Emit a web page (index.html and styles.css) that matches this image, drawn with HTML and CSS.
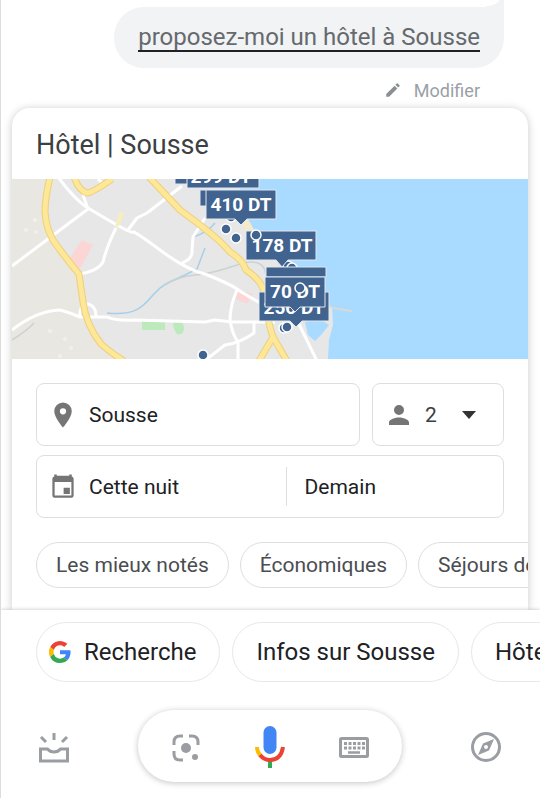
FILE: index.html
```html
<!DOCTYPE html>
<html lang="fr">
<head>
<meta charset="utf-8">
<meta name="viewport" content="width=device-width, initial-scale=1">
<title>Assistant</title>
<link rel="stylesheet" href="styles.css">
</head>
<body>
<main class="conversation">
  <div class="query">
    <p class="bubble"><span class="bubble-text">proposez-moi un hôtel à Sousse</span></p>
    <button class="edit" type="button">
      <svg width="18" height="18" viewBox="0 0 24 24" aria-hidden="true"><path fill="#8b8f93" d="M3 17.2V21h3.800L17.800 9.900l-3.700-3.700zM20.700 7a1 1 0 0 0 0-1.400l-2.300-2.300a1 1 0 0 0-1.400 0l-1.800 1.800 3.700 3.700z"/></svg>
      Modifier
    </button>
  </div>

  <section class="card">
    <h1 class="card-title">Hôtel | Sousse</h1>
    <svg class="map" viewBox="12 179 516 180" preserveAspectRatio="xMidYMid slice" role="img" aria-label="Sousse">
      <rect x="12" y="179" width="516" height="180" fill="#e7e7e7"/>
      <path fill="#e9e7e2" d="M12 179H58L45 212L55 240L82 275L85 310L95 335L123 359H12z"/>
      <path fill="#a9daff" d="M240 179H528V359H328L329 340L333 325L332 308L320 300L300 276L270 250L256 240L240 216z"/>
      <path fill="#f4eacb" d="M240 219l8 0 8 14-8 5z"/>
      <path fill="#a9daff" d="M305 322L318 318L329 325L322 334L315 341L308 335z"/>
      <path d="M326 304L333 308L352 311" fill="none" stroke="#d9d9d5" stroke-width="2"/>
      <g fill="#fbd6d5"><path d="M82 240L93 245L80 269L69 259z"/><path d="M237 289L253 294L247 304L236 299z"/></g>
      <g fill="#bdeabd"><path d="M142 320h23v10h-23z"/><path d="M173 323q11-5 11 6q-1 7-7 5q-4-5-4-11z"/></g>
      <g fill="#f1f0ea"><circle cx="35" cy="220" r="2"/><circle cx="26" cy="230" r="2"/><circle cx="36" cy="232" r="2"/><circle cx="50" cy="331" r="2"/><circle cx="65" cy="339" r="2"/><circle cx="71" cy="348" r="2"/><circle cx="60" cy="356" r="2"/></g>
      <g fill="none" stroke="#a6cfea" stroke-width="1.500">
        <path d="M107 313C135 316 143 307 153 295S174 280 183 276L197 269L205 248M193 237Q207 233 215 223"/>
        <path stroke="#cbd2d6" d="M12 340Q28 330 34 323M165 285Q180 276 195 275T237 265T266 275"/>
      </g>
      <g fill="none" stroke="#fff" stroke-width="3" stroke-linejoin="round">
        <path d="M58 177Q75 200 88 208T117 225T133 232T160 250T205 274Q230 284 237 289T262 304"/>
        <path d="M12 266L88 209L83 195M98 179l4 4M80 274Q98 271 103 262Q107 246 116 228M128 230L137 218L147 213L182 186"/>
        <path d="M12 330Q36 311 60 310Q68 312 80 317H107Q115 321 135 320L205 322L215 320L232 322H275"/>
        <path d="M80 317Q79 304 88 304Q96 306 96 316M182 263Q193 259 192 250L193 237L205 218"/>
        <path d="M237 290Q230 306 230 320Q232 334 238 342V359M207 359L225 345Q240 343 254 333V323M298 322L317 361"/>
      </g>
      <path d="M117 226L122 212" stroke="#f7efb7" stroke-width="4" fill="none"/>
      <g fill="none" stroke-linejoin="round">
        <g stroke="#ecd07c" stroke-width="7">
          <path d="M50 177Q45 198 45 212Q46 228 53 240Q64 256 79 274L83 302Q86 325 101 344Q110 352 124 361"/>
          <path d="M74 177Q79 191 87 193Q92 193 112 179M149 177L180 210L200 225Q220 240 230 252Q243 260 246 270Q265 282 266 301T273 337L259 361M273 337L287 361"/>
        </g>
        <g stroke="#fee796" stroke-width="5">
          <path d="M50 177Q45 198 45 212Q46 228 53 240Q64 256 79 274L83 302Q86 325 101 344Q110 352 124 361"/>
          <path d="M74 177Q79 191 87 193Q92 193 112 179M149 177L180 210L200 225Q220 240 230 252Q243 260 246 270Q265 282 266 301T273 337L259 361M273 337L287 361"/>
        </g>
      </g>
      <g class="pin">
        <circle cx="231" cy="217" r="5"/><circle cx="226" cy="229" r="5"/><circle cx="236" cy="238" r="5"/>
        <circle cx="288" cy="266" r="5"/><circle cx="292" cy="268" r="5"/><circle cx="284" cy="328" r="5"/><circle cx="287" cy="327" r="5"/><circle cx="203" cy="355" r="5"/>
      </g>
      <g class="tag">
        <path d="M175 170H196V184H175z"/>
        <path d="M187 160H259V188H187z"/><text x="221" y="183">299 DT</text>
        <path d="M200 190H230V206H200z"/>
        <path d="M206 190H276V219H247L241 225L235 219H206z"/><text x="241" y="211">410 DT</text>
        <path d="M246 231H316V260H288L282 267L276 260H246z"/><text x="282" y="252">178 DT</text>
        <path d="M259 292H329V321H302L296 327L290 321H259z"/><text x="294" y="314">256 DT</text>
        <path d="M266 267H326V277H266z"/>
        <path d="M265 277H325V307H300L295 312L290 307H265z"/><text x="295" y="298">70 DT</text>
      </g>
      <g class="pin"><circle cx="256" cy="235" r="5"/><circle cx="300" cy="288" r="5"/></g>
    </svg>

    <form class="search">
      <div class="row">
        <label class="field place">
          <svg width="30" height="30" viewBox="0 0 24 24" aria-hidden="true"><path fill="#757575" d="M12 2a7 7 0 0 0-7 7c0 5.200 7 13 7 13s7-7.800 7-13a7 7 0 0 0-7-7zm0 9.500a2.500 2.500 0 1 1 0-5 2.500 2.500 0 0 1 0 5z"/></svg>
          <input type="text" value="Sousse" aria-label="Destination">
        </label>
        <label class="field guests">
          <svg width="30" height="30" viewBox="0 0 24 24" aria-hidden="true"><path fill="#757575" d="M12 12a4 4 0 1 0 0-8 4 4 0 0 0 0 8zm0 2c-2.700 0-8 1.300-8 4v2h16v-2c0-2.700-5.300-4-8-4z"/></svg>
          <select aria-label="Voyageurs"><option>2</option></select>
          <svg class="arrow" width="16" height="8" viewBox="0 0 16 8" aria-hidden="true"><path fill="#333" d="M1 0h14L8 8z"/></svg>
        </label>
      </div>
      <div class="field dates">
        <button class="date" type="button">
          <svg width="30" height="30" viewBox="0 0 24 24" aria-hidden="true"><path fill="#757575" fill-rule="evenodd" d="M17.500 12.500h-5v5h5zM17 2v1H7V2H5v1.500a1.800 1.800 0 0 0-1.500 1.800v13.400A1.800 1.800 0 0 0 5.300 20.500h13.400a1.800 1.800 0 0 0 1.800-1.800V5.300A1.800 1.800 0 0 0 19 3.500V2zM18.700 18.700H5.300V8h13.400z"/></svg>
          Cette nuit
        </button>
        <button class="date end" type="button">Demain</button>
      </div>
    </form>
    <div class="filters">
      <button type="button">Les mieux notés</button>
      <button type="button">Économiques</button>
      <button type="button">Séjours de luxe</button>
    </div>
  </section>
</main>

<footer class="sheet">
  <div class="suggestions">
    <button class="search-chip" type="button">
      <svg width="22" height="22" viewBox="0 0 48 48" aria-hidden="true">
        <path fill="#ea4335" d="M24 9.500c3.500 0 6.700 1.200 9.200 3.600l6.900-6.900A24 24 0 0 0 2.600 13.200l8 6.200C12.400 13.700 17.700 9.500 24 9.500z"/>
        <path fill="#4285f4" d="M47 24.600c0-1.600-.2-3.100-.4-4.600H24v9h12.900a11 11 0 0 1-4.700 7.200l7.700 6C44.400 38 47 31.800 47 24.600z"/>
        <path fill="#fbbc05" d="M10.500 28.600a14.500 14.500 0 0 1 0-9.200l-8-6.200a24 24 0 0 0 0 21.600z"/>
        <path fill="#34a853" d="M24 48c6.500 0 11.900-2.100 15.900-5.800l-7.700-6A14.400 14.400 0 0 1 10.500 28.600l-8 6.200A24 24 0 0 0 24 48z"/>
      </svg>
      Recherche
    </button>
    <button type="button">Infos sur Sousse</button>
    <button type="button">Hôtels</button>
  </div>
  <nav class="bar">
    <button class="icon" type="button" aria-label="Mises à jour">
      <svg width="36" height="36" viewBox="0 0 36 36" fill="none" stroke="#9a9da1" stroke-width="3" aria-hidden="true"><path d="M4.500 20v12h27V20h-7q-2.500 3-6.500 3T11.500 20zM18 4v7M5 8l5 5M31 8l-5 5"/></svg>
    </button>
    <div class="pill">
      <button class="icon" type="button" aria-label="Lens">
        <svg width="32" height="32" viewBox="0 0 32 32" fill="none" stroke="#9a9da1" stroke-width="3" aria-hidden="true"><path d="M4 14v-3q0-6 6-6h3M19 5h3q6 0 6 6v3M4 20v3q0 6 6 6h3"/><circle cx="16" cy="17" r="5" fill="#9a9da1" stroke="none"/><circle cx="25" cy="26" r="3" fill="#9a9da1" stroke="none"/></svg>
      </button>
      <button class="icon" type="button" aria-label="Micro">
        <svg width="32" height="44" viewBox="0 0 32 44" fill="none" stroke-width="4" aria-hidden="true"><path stroke="#34a853" d="M16 35v8"/><path stroke="#fbbc05" d="M3 22q0 5 4 9"/><path stroke="#ea4335" d="M6 30q4 5 10 5q11 0 13-13"/><rect x="9.500" y="1" width="13" height="28" rx="6.500" fill="#4285f4"/></svg>
      </button>
      <button class="icon" type="button" aria-label="Clavier">
        <svg width="32" height="32" viewBox="0 0 32 32" aria-hidden="true"><rect x="2.500" y="7.500" width="27" height="18" rx="1" fill="none" stroke="#9a9da1" stroke-width="3"/><path fill="none" stroke="#9a9da1" stroke-width="3" stroke-dasharray="3 1.500" d="M6 12.500h21M6 17h21"/><path stroke="#9a9da1" stroke-width="2.500" d="M10 21.500h12"/></svg>
      </button>
    </div>
    <button class="icon" type="button" aria-label="Explorer">
      <svg width="36" height="36" viewBox="0 0 36 36" aria-hidden="true"><circle cx="18" cy="18" r="13.500" fill="none" stroke="#9a9da1" stroke-width="3"/><path fill="#9a9da1" fill-rule="evenodd" d="M26 10l-5 11.500L10 26l5-11.500zM18 16a2 2 0 1 0 0 4 2 2 0 0 0 0-4z"/></svg>
    </button>
  </nav>
</footer>
</body>
</html>
```
FILE: styles.css
```css
* {
  box-sizing: border-box;
}

body {
  margin: 0;
  height: 100vh;
  display: flex;
  flex-direction: column;
  overflow: hidden;
  border-left: 1px solid #dcdcdc;
  background: #fff;
  color: #202124;
  font-family: Roboto, "Liberation Sans", sans-serif;
}

button,
input,
select {
  border: 0;
  padding: 0;
  background: none;
  color: inherit;
  font: inherit;
}

svg {
  display: block;
  flex: none;
}

.conversation {
  flex: 1;
  min-height: 0;
  display: flex;
  flex-direction: column;
  padding: 7px 12px 0 11px;
}

.query {
  display: flex;
  flex-direction: column;
  align-items: flex-end;
  padding-right: 24px;
}

.bubble {
  position: relative;
  margin: 0;
  padding: 17px 24px 16px;
  border-radius: 30px 0 30px 30px;
  background: #f1f3f4;
  color: #66696d;
  font-size: 24px;
  line-height: 26px;
}

.bubble::before {
  content: "";
  position: absolute;
  right: 0;
  bottom: 100%;
  width: 24px;
  height: 8px;
  background: radial-gradient(ellipse 20px 8px at 0 0, #fff 96%, #f1f3f4);
}

.bubble-text {
  display: block;
  border-bottom: 2px solid #202124;
}

.edit {
  display: flex;
  align-items: center;
  gap: 12px;
  height: 40px;
  padding: 4px 24px 0 0;
  color: #9aa0a6;
  font-size: 18px;
}

.card {
  flex: 1;
  min-height: 0;
  overflow: hidden;
  border-radius: 18px 18px 0 0;
  box-shadow: 0 1px 8px rgba(0, 0, 0, 0.22);
  background: #fff;
}

.card-title {
  margin: 0;
  padding: 21px 24px 18px;
  color: #3c4043;
  font-size: 27px;
  font-weight: 400;
  line-height: 32px;
}

.map {
  width: 100%;
  height: 180px;
}

.pin {
  fill: #41638f;
  stroke: #fff;
  stroke-width: 1.5;
}

.tag path {
  fill: #41638f;
  stroke: #e2e8ef;
  stroke-width: 1;
}

.tag text {
  fill: #fff;
  font-size: 19px;
  font-weight: 700;
  text-anchor: middle;
}

.search {
  display: flex;
  flex-direction: column;
  gap: 9px;
  padding: 24px;
  font-size: 21px;
}

.row {
  display: flex;
  gap: 12px;
}

.field {
  display: flex;
  align-items: center;
  height: 63px;
  border: 1px solid #dedede;
  border-radius: 8px;
}

.place {
  flex: 1;
  min-width: 0;
  gap: 11px;
  padding: 0 11px;
}

.place input {
  flex: 1;
  min-width: 0;
}

.guests {
  position: relative;
  width: 132px;
  color: #3c4043;
}

.guests > svg:first-child {
  margin-left: 11px;
}

.guests select {
  flex: 1;
  align-self: stretch;
  padding-left: 11px;
  appearance: none;
}

.arrow {
  position: absolute;
  right: 26px;
  pointer-events: none;
}

.dates {
  display: grid;
  grid-template-columns: 8fr 7fr;
}

.date {
  display: flex;
  align-items: center;
  gap: 11px;
  height: 39px;
  padding-left: 11px;
}

.end {
  padding-left: 18px;
  border-left: 1px solid #dedede;
}

.filters,
.suggestions {
  display: flex;
  overflow: hidden;
  white-space: nowrap;
}

.filters {
  gap: 11px;
  padding-left: 24px;
}

.filters button {
  flex: none;
  height: 46px;
  padding: 0 19px;
  border: 1px solid #dedede;
  border-radius: 23px;
  color: #4a4d51;
  font-size: 21px;
}

.sheet {
  position: relative;
  display: flex;
  flex-direction: column;
  gap: 28px;
  padding: 12px 0 16px;
  background: #fff;
  box-shadow: 0 -1px 3px rgba(0, 0, 0, 0.16);
}

.suggestions {
  gap: 12px;
  padding-left: 35px;
}

.suggestions button {
  flex: none;
  height: 60px;
  padding: 0 23px;
  border: 1px solid #e8e8e8;
  border-radius: 30px;
  font-size: 24px;
}

.suggestions .search-chip {
  display: flex;
  align-items: center;
  gap: 13px;
  padding-left: 12px;
}

.bar {
  display: flex;
  align-items: center;
  justify-content: space-between;
  padding: 0 36px 0 35px;
}

.icon {
  padding-top: 2px;
}

.pill {
  display: flex;
  align-items: center;
  gap: 52px;
  height: 72px;
  padding: 0 32px;
  border-radius: 36px;
  box-shadow: 0 1px 6px rgba(0, 0, 0, 0.24);
}
```
